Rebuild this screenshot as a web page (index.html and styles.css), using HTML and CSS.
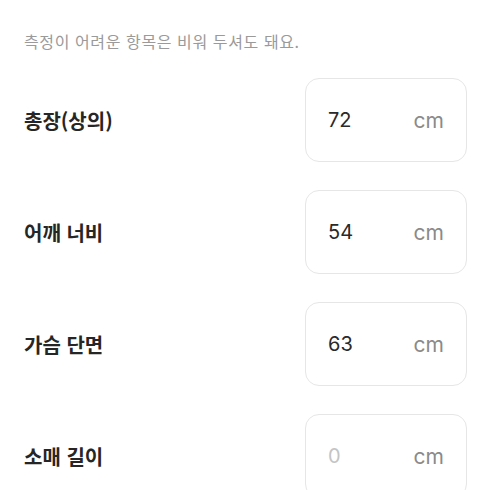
FILE: index.html
```html
<!DOCTYPE html>
<html lang="ko">
<head>
    <meta charset="UTF-8">
    <meta name="viewport" content="width=device-width, initial-scale=1.0">
    <title>실측 사이즈</title>
    <link rel="stylesheet" href="styles.css">
</head>
<body>
    <div class="page">
        <p class="hint">측정이 어려운 항목은 비워 두셔도 돼요.</p>
        <div class="size-list">
            <div class="size-row">
                <label for="length">총장(상의)</label>
                <div class="size-box">
                    <input type="text" id="length" value="72">
                    <span class="unit">cm</span>
                </div>
            </div>
            <div class="size-row">
                <label for="shoulder">어깨 너비</label>
                <div class="size-box">
                    <input type="text" id="shoulder" value="54">
                    <span class="unit">cm</span>
                </div>
            </div>
            <div class="size-row">
                <label for="chest">가슴 단면</label>
                <div class="size-box">
                    <input type="text" id="chest" value="63">
                    <span class="unit">cm</span>
                </div>
            </div>
            <div class="size-row">
                <label for="sleeve">소매 길이</label>
                <div class="size-box">
                    <input type="text" id="sleeve" placeholder="0">
                    <span class="unit">cm</span>
                </div>
            </div>
        </div>
    </div>
</body>
</html>
```

FILE: styles.css
```css
body {
    margin: 0;
    background: #fff;
    font-family: "Noto Sans CJK KR", "Noto Sans", sans-serif;
    color: #222;
}
.page {
    padding: 30px 23px 0 24px;
}
.hint {
    margin: 0 0 26px;
    font-size: 16px;
    line-height: 22px;
    letter-spacing: 0.6px;
    color: #9a9a9a;
}
.size-list {
    display: flex;
    flex-direction: column;
    gap: 28px;
}
.size-row {
    display: flex;
    justify-content: space-between;
    align-items: center;
    height: 84px;
}
.size-row label {
    font-size: 20px;
    font-weight: 700;
    color: #262626;
}
.size-box {
    width: 162px;
    height: 84px;
    box-sizing: border-box;
    border: 1px solid #e6e6e6;
    border-radius: 14px;
    display: flex;
    align-items: center;
    padding: 0 22px 0 22px;
}
.size-box input {
    flex: 1;
    min-width: 0;
    border: none;
    outline: none;
    padding: 0;
    background: transparent;
    font-family: "Inter", "Noto Sans", sans-serif;
    font-size: 20px;
    color: #2a2a2a;
}
.size-box input::placeholder {
    color: #c4c4c4;
}
.unit {
    font-family: "Inter", "Noto Sans", sans-serif;
    font-size: 21px;
    color: #8a8a8a;
}
```
